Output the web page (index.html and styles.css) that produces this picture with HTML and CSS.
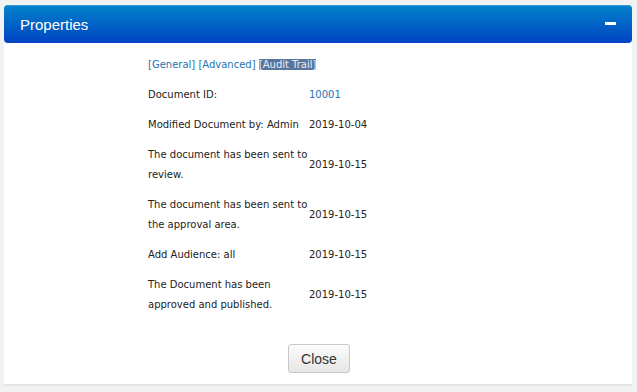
FILE: index.html
```html
<!DOCTYPE html>
<html lang="en">

<head>
    <meta charset="UTF-8">
    <meta name="viewport" content="width=device-width, initial-scale=1.0">
    <title>Properties</title>
    <link rel="stylesheet" href="styles.css">
</head>

<body>
    <div class="panel">
        <!-- Panel header -->
        <div class="panel-header">
            <span class="panel-title">Properties</span>
            <span class="collapse-btn"></span>
        </div>

        <!-- Panel body -->
        <div class="panel-body">
            <table class="props">
                <tr>
                    <td colspan="2" class="tabs">
                        <a href="#">[General]</a>
                        <a href="#">[Advanced]</a>
                        <a href="#" class="active">[Audit Trail]</a>
                    </td>
                </tr>
                <tr>
                    <td class="label">Document ID:</td>
                    <td><a href="#">10001</a></td>
                </tr>
                <tr>
                    <td class="label">Modified Document by: Admin</td>
                    <td>2019-10-04</td>
                </tr>
                <tr>
                    <td class="label">The document has been sent to review.</td>
                    <td>2019-10-15</td>
                </tr>
                <tr>
                    <td class="label">The document has been sent to the approval area.</td>
                    <td>2019-10-15</td>
                </tr>
                <tr>
                    <td class="label">Add Audience: all</td>
                    <td>2019-10-15</td>
                </tr>
                <tr>
                    <td class="label">The Document has been approved and published.</td>
                    <td>2019-10-15</td>
                </tr>
            </table>

            <div class="actions">
                <button type="button" class="btn">Close</button>
            </div>
        </div>
    </div>
</body>

</html>
```
FILE: styles.css
```css
/* Page */
body {
    margin: 0;
    padding: 5px 5px 0 4px;
    background: #f2f2f2;
    font-family: "DejaVu Sans", Verdana, sans-serif;
}

/* Panel */
.panel {
    background: #fff;
    border-bottom: 2px solid #e4e4e4;
}

.panel-header {
    height: 38px;
    display: flex;
    align-items: center;
    justify-content: space-between;
    padding: 0 16px 0 16px;
    border-radius: 4px;
    background: linear-gradient(#0283c9, #0143c3);
    box-shadow: inset 0 1px 0 #3a9ad8;
}

.panel-title {
    font-family: "Liberation Sans", Arial, sans-serif;
    font-size: 15px;
    color: #fff;
    padding-top: 1px;
}

.collapse-btn {
    width: 11px;
    height: 3px;
    background: #fff;
    margin-bottom: 2px;
}

.panel-body {
    padding: 7px 0 11px 0;
}

/* Properties table */
.props {
    border-collapse: collapse;
    margin-left: 144px;
    font-size: 10px;
    color: #222;
}

.props td {
    padding: 5px 0;
    line-height: 20px;
    vertical-align: middle;
}

.props td.label {
    width: 161px;
}

.props a {
    color: #2673b3;
    text-decoration: none;
}

.props .tabs a.active {
    background: #58759e;
    color: #e8edf5;
}

/* Close button */
.actions {
    text-align: center;
    padding-top: 24px;
}

.btn {
    font-family: "Liberation Sans", Arial, sans-serif;
    font-size: 14px;
    color: #333;
    height: 29px;
    padding: 0 12px;
    margin-left: 2px;
    border: 1px solid #c8c8c8;
    border-radius: 3px;
    background: linear-gradient(#fcfcfc, #e6e6e6);
    cursor: pointer;
}
```
